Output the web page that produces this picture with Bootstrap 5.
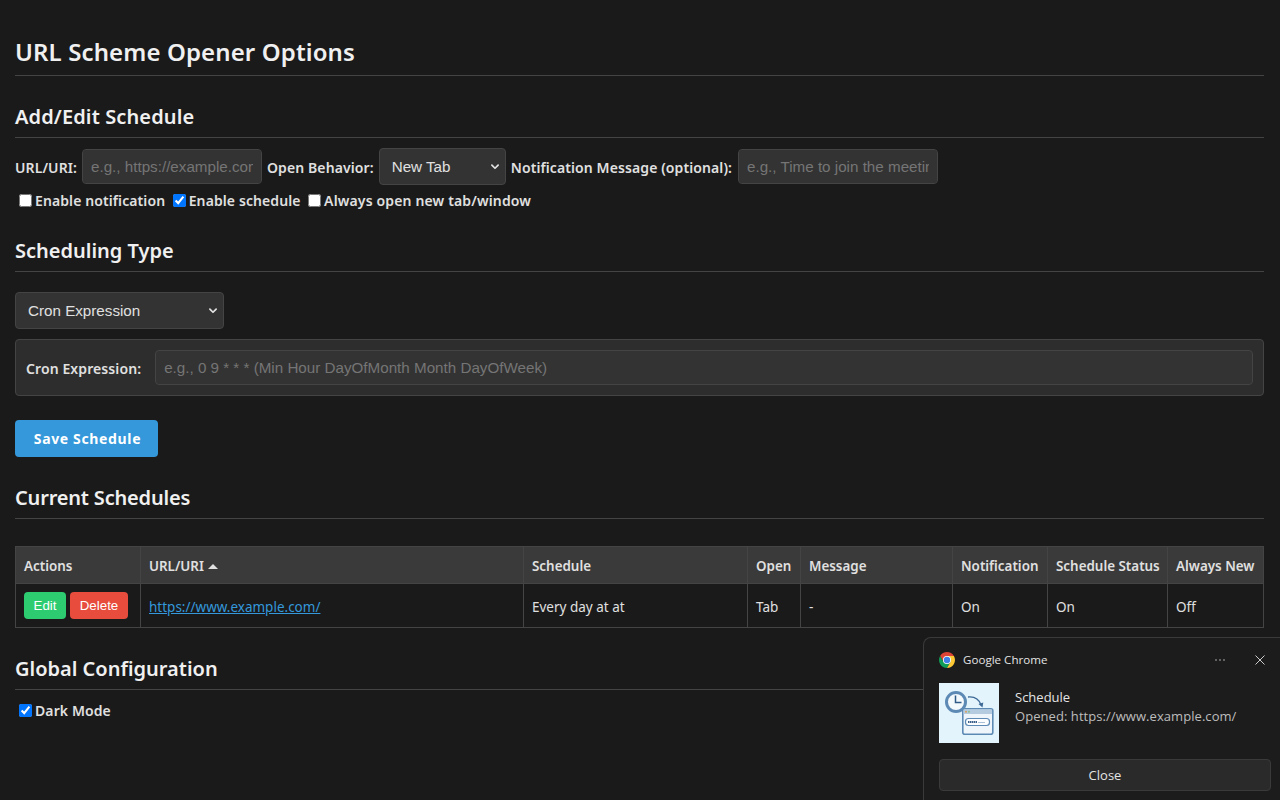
<!DOCTYPE html>
<html lang="en">
<head>
    <meta charset="UTF-8">
    <meta name="viewport" content="width=device-width, initial-scale=1.0">
    <title>URL Scheme Opener Options</title>
    <link rel="stylesheet" href="https://cdn.jsdelivr.net/npm/bootstrap@5.3.0/dist/css/bootstrap.min.css">
    <style>
        html, body { height: 100%; overflow: hidden; }
        body { background: #1a1a1a; color: #e0e0e0; font-family: "Noto Sans", "Open Sans", sans-serif; font-size: 14px; padding: 15px 16px 15px 15px; position: relative; }
        .page-title { font-size: 24px; font-weight: 600; color: #f0f0f0; line-height: 33px; letter-spacing: .12px; margin: 20px 0 0; padding-bottom: 7px; border-bottom: 1px solid #444; }
        .section-title { font-size: 20px; font-weight: 600; color: #f0f0f0; line-height: 27px; margin: 0; padding-bottom: 7px; border-bottom: 1px solid #444; }
        .add-title { margin-top: 27px; letter-spacing: .12px; }
        .sched-title { margin-top: 27px; }
        .current-title { margin-top: 27px; letter-spacing: -.18px; }
        .global-title { margin-top: 27px; }
        .field-label { font-weight: 600; color: #e0e0e0; white-space: nowrap; margin: 0; font-size: 14px; letter-spacing: .1px; padding-top: 2px; }
        .form-row-main { margin-top: 11px; gap: 5px; height: 35px; }
        .dark-input.form-control, .dark-input.form-select { background-color: #333; border: 1px solid #444; color: #e0e0e0; font-family: "Liberation Sans", Arial, sans-serif; font-size: 15.2px; border-radius: 4px; }
        .dark-input.form-control { padding: 6px 8px; height: 35px; }
        .dark-input.form-control::placeholder { color: #757575; opacity: 1; }
        .input-url { width: 180px; }
        .input-msg { width: 200px; margin-left: 1px; }
        .dark-input.select-open { width: 127px; height: 37px; padding: 7px 12px 5px; }
        .dark-input.select-type { width: 209px; height: 37px; padding: 7px 12px 5px; margin-top: 20px; }
        .dark-input.form-select { --bs-form-select-bg-img: url("data:image/svg+xml,%3csvg xmlns='http://www.w3.org/2000/svg' viewBox='0 0 16 16'%3e%3cpath fill='none' stroke='%23e0e0e0' stroke-linecap='round' stroke-linejoin='round' stroke-width='2.8' d='m3 5 5 5 5-5'/%3e%3c/svg%3e"); background-size: 10px 10px; background-position: right 5px center; }
        .check-row { margin-top: 6px; padding-left: 4px; gap: 7.5px; height: 20px; }
        .check-label { font-weight: 600; margin: 0; display: flex; align-items: center; gap: 3px; white-space: nowrap; letter-spacing: .1px; }
        .check-label.check-long { letter-spacing: .15px; }
        .check-label input { width: 13px; height: 13px; margin: 0; accent-color: #0075ff; }
        .cron-box { background: #2d2d2d; border: 1px solid #444; border-radius: 4px; margin-top: 10px; height: 57px; padding: 0 10px; gap: 14px; }
        .cron-box .form-control { flex: 1; }
        .save-btn { background: #3498db; color: #fff; border: 0; border-radius: 4px; font-weight: 700; font-size: 14px; font-family: "Noto Sans", sans-serif; width: 143px; height: 37px; margin-top: 24px; padding: 0 0 0 2px; letter-spacing: .65px; }
        .save-btn:hover { background: #3498db; color: #fff; }
        .sched-table { margin: 27px 0 0; table-layout: fixed; width: 100%; border-collapse: collapse; --bs-table-bg: transparent; --bs-table-color: #e0e0e0; --bs-table-border-color: #444; }
        .sched-table th { background: #3a3a3a; color: #e0e0e0; font-weight: 600; padding: 2px 8px 0; height: 37px; vertical-align: middle; font-size: 13.4px; white-space: nowrap; }
        .sched-table td { padding: 4px 8px 0; height: 44px; vertical-align: middle; font-size: 13.5px; border-color: #444; }
        .sched-table td.action-cell { padding-top: 0; }
        .sort-arrow { display: inline-block; width: 0; height: 0; border-left: 5px solid transparent; border-right: 5px solid transparent; border-bottom: 5px solid #e0e0e0; margin-left: 1px; vertical-align: 2px; }
        .row-btn { font-family: "Liberation Sans", Arial, sans-serif; font-size: 13.33px; height: 27px; padding: 0; border: 0; border-radius: 4px; color: #fff; }
        .row-btn-edit { width: 42px; background: #2ecc71; }
        .row-btn-del { width: 58px; background: #e74c3c; margin-left: 4px; }
        .url-link { color: #3498db; }
        .global-check { margin-top: 10px; padding-left: 4px; height: 20px; }
        .toast-box { position: absolute; left: 923px; top: 637px; width: 357px; height: 163px; background: #1c1c1c; border: 1px solid #3a3a3a; border-right: 0; border-bottom: 0; border-top-left-radius: 8px; font-family: "Open Sans", "Noto Sans", sans-serif; font-size: 13px; color: #e4e4e4; padding: 14px 9px 0 15px; }
        .toast-app { font-size: 11.6px; gap: 8px; height: 16px; }
        .toast-tools { margin-left: auto; gap: 28px; padding-right: 5px; color: #bbb; }
        .toast-body-row { margin-top: 15px; gap: 16px; }
        .toast-pic { width: 60px; height: 60px; display: block; }
        .toast-text { padding-top: 5px; line-height: 19px; }
        .toast-sub { color: #bdbdbd; letter-spacing: .06px; }
        .toast-close { width: 332px; height: 32px; margin-top: 16px; background: #2a2a2a; border: 1px solid #3a3a3a; border-radius: 4px; color: #e4e4e4; font-size: 13px; padding: 2px 0 0; }
    </style>
</head>
<body>
    <h1 class="page-title">URL Scheme Opener Options</h1>

    <!-- Add / edit -->
    <h2 class="section-title add-title">Add/Edit Schedule</h2>
    <div class="d-flex align-items-center form-row-main">
        <label class="field-label">URL/URI:</label>
        <input class="form-control dark-input input-url" placeholder="e.g., https://example.com">
        <label class="field-label">Open Behavior:</label>
        <select class="form-select dark-input select-open"><option>New Tab</option></select>
        <label class="field-label">Notification Message (optional):</label>
        <input class="form-control dark-input input-msg" placeholder="e.g., Time to join the meeting">
    </div>
    <div class="d-flex align-items-center check-row">
        <label class="check-label"><input type="checkbox">Enable notification</label>
        <label class="check-label"><input type="checkbox" checked>Enable schedule</label>
        <label class="check-label check-long"><input type="checkbox">Always open new tab/window</label>
    </div>

    <!-- Scheduling type -->
    <h2 class="section-title sched-title">Scheduling Type</h2>
    <select class="form-select dark-input select-type"><option>Cron Expression</option></select>
    <div class="d-flex align-items-center cron-box">
        <label class="field-label">Cron Expression:</label>
        <input class="form-control dark-input" placeholder="e.g., 0 9 * * * (Min Hour DayOfMonth Month DayOfWeek)">
    </div>
    <button class="btn save-btn d-block">Save Schedule</button>

    <!-- Current schedules -->
    <h2 class="section-title current-title">Current Schedules</h2>
    <table class="table table-bordered sched-table">
        <colgroup>
            <col style="width:125px"><col style="width:383px"><col style="width:224px"><col style="width:53px">
            <col style="width:152px"><col style="width:95px"><col style="width:120px"><col style="width:96px">
        </colgroup>
        <thead>
            <tr>
                <th>Actions</th>
                <th>URL/URI <span class="sort-arrow"></span></th>
                <th>Schedule</th>
                <th>Open</th>
                <th>Message</th>
                <th>Notification</th>
                <th>Schedule Status</th>
                <th>Always New</th>
            </tr>
        </thead>
        <tbody>
            <tr>
                <td class="action-cell"><button class="row-btn row-btn-edit">Edit</button><button class="row-btn row-btn-del">Delete</button></td>
                <td><a class="url-link" href="#">https://www.example.com/</a></td>
                <td>Every day at at</td>
                <td>Tab</td>
                <td>-</td>
                <td>On</td>
                <td>On</td>
                <td>Off</td>
            </tr>
        </tbody>
    </table>

    <!-- Global config -->
    <h2 class="section-title global-title">Global Configuration</h2>
    <div class="d-flex align-items-center global-check">
        <label class="check-label"><input type="checkbox" checked>Dark Mode</label>
    </div>

    <!-- Desktop notification over the page -->
    <div class="toast-box">
        <div class="d-flex align-items-center toast-app">
            <svg width="16" height="16" viewBox="4 4 40 40">
                <path fill="#db4437" d="M6.700 14A20 20 0 0 1 41.300 14H24L15.300 29z"/>
                <path fill="#0f9d58" d="M6.700 14A20 20 0 0 0 24 44L32.700 29H15.300z"/>
                <path fill="#fcc934" d="M41.300 14A20 20 0 0 1 24 44L32.700 29L24 14z"/>
                <circle cx="24" cy="24" r="10" fill="#fff"/>
                <circle cx="24" cy="24" r="8" fill="#3f7fe8"/>
            </svg>
            <span>Google Chrome</span>
            <div class="d-flex align-items-center toast-tools">
                <svg width="12" height="12" viewBox="0 0 12 12" fill="#bbb"><circle cx="2" cy="6" r=".8"/><circle cx="6" cy="6" r=".8"/><circle cx="10" cy="6" r=".8"/></svg>
                <svg width="12" height="12" viewBox="0 0 12 12" stroke="#ccc" stroke-width="1" fill="none"><path d="M1.500 1.500l9 9M10.500 1.500l-9 9"/></svg>
            </div>
        </div>
        <div class="d-flex toast-body-row">
            <svg class="toast-pic" viewBox="0 0 60 60">
                <rect width="60" height="60" fill="#e3f4fc"/>
                <circle cx="17" cy="19" r="9.500" fill="#f4f9fc" stroke="#5d8ab5" stroke-width="3"/>
                <path d="M16.500 12.500v7h6" fill="none" stroke="#2f5b86" stroke-width="1.500"/>
                <path d="M29 14q10-1 13 8" fill="none" stroke="#3e6a96" stroke-width="1.400"/>
                <path d="M39.500 21l4 3.500 .8-5z" fill="#3e6a96"/>
                <rect x="23.800" y="25.800" width="30" height="25.400" rx="2" fill="#eef6fb" stroke="#5d8ab5" stroke-width="1.600"/>
                <rect x="24.500" y="26.500" width="28.600" height="4.500" fill="#b4cbe0"/>
                <circle cx="27" cy="28.700" r="1" fill="#d9a05a"/>
                <circle cx="30" cy="28.700" r="1" fill="#8fbf8f"/>
                <rect x="26.500" y="35.500" width="24" height="7" rx="3" fill="#fbfdfe" stroke="#5d8ab5" stroke-width="1.200"/>
                <path d="M29 39h9" stroke="#3a5f88" stroke-width="2" stroke-dasharray="1.500 .5"/>
                <path d="M39 39.500h7" stroke="#a9c0d6" stroke-width="1"/>
            </svg>
            <div class="toast-text">
                <div>Schedule</div>
                <div class="toast-sub">Opened: https://www.example.com/</div>
            </div>
        </div>
        <button class="toast-close d-block">Close</button>
    </div>
</body>
</html>
